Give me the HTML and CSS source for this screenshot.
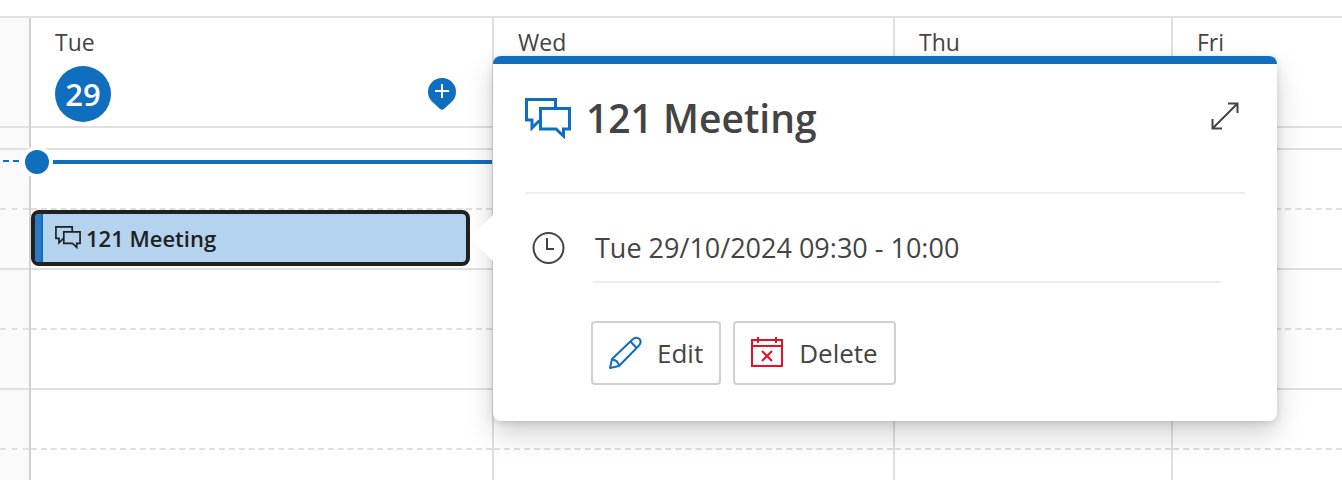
FILE: index.html
```html
<!DOCTYPE html>
<html lang="en-GB">
<head>
    <meta charset="UTF-8">
    <meta name="viewport" content="width=device-width, initial-scale=1.0">
    <title>Calendar</title>
    <link rel="stylesheet" href="styles.css">
</head>
<body>
    <svg class="sprite" aria-hidden="true">
        <symbol id="icon-chat" viewBox="0 0 46 41">
            <path d="M30.500 9V1.500H1.500V22H7V30L14.500 22.500"/>
            <path d="M15.500 10.500H44.500V31H38.500V38L31 31H15.500Z"/>
        </symbol>
    </svg>

    <main class="calendar">
        <div class="gutter">
            <div class="day-header"></div>
            <div class="all-day"></div>
            <div class="slot half">
                <span class="now-dashes"></span>
            </div>
            <div class="slot"></div>
            <div class="slot half"></div>
            <div class="slot"></div>
            <div class="slot half"></div>
            <div class="slot"></div>
        </div>

        <section class="day">
            <header class="day-header">
                <div class="day-name">Tue</div>
                <div class="day-row">
                    <span class="day-number">29</span>
                    <button class="add-btn" type="button" aria-label="Add event">
                        <svg width="28" height="32" viewBox="0 0 28 32">
                            <path d="M14 0a14 14 0 0 1 14 14c0 4-1.500 7-4 9.500l-8 7.500q-2 1.500-4 0l-8-7.500C1.500 21 0 18 0 14A14 14 0 0 1 14 0Z" fill="#106ebe"/>
                            <path d="M14 6v14M7 13h14" stroke="#fff" stroke-width="2"/>
                        </svg>
                    </button>
                </div>
            </header>
            <div class="all-day"></div>
            <div class="slot half">
                <span class="now-line"></span>
                <span class="now-dot"></span>
            </div>
            <div class="slot">
                <button class="event" type="button">
                    <span class="event-bar"></span>
                    <svg class="event-icon"><use href="#icon-chat"/></svg>
                    <span>121 Meeting</span>
                </button>

                <div class="callout" role="dialog" aria-labelledby="callout-title">
                    <div class="callout-head">
                        <svg class="callout-icon"><use href="#icon-chat"/></svg>
                        <h2 class="callout-title" id="callout-title">121 Meeting</h2>
                        <button class="expand-btn" type="button" aria-label="Open event">
                            <svg width="28" height="28" viewBox="0 0 28 28" fill="none" stroke="#444" stroke-width="2">
                                <path d="M2 26L26 2M17 1.500H26.500V11M1.500 17V26.500H11"/>
                            </svg>
                        </button>
                    </div>
                    <div class="callout-time">
                        <svg width="34" height="34" viewBox="0 0 34 34" fill="none" stroke="#444" stroke-width="2">
                            <circle cx="17.500" cy="17" r="15"/>
                            <path d="M16 7V18H23"/>
                        </svg>
                        <span class="time-text">Tue 29/10/2024 09:30 - 10:00</span>
                    </div>
                    <div class="callout-actions">
                        <button class="btn" type="button">
                            <svg width="34" height="34" viewBox="0 0 34 34" fill="none" stroke="#106ebe" stroke-width="2" stroke-linejoin="round">
                                <path d="M2 32L4 23L25 3Q28.500 .5 31.500 3Q34 6 31 9.500L11 30Z"/>
                                <path d="M4 23.500Q10 24 11 30M22.500 5.500L28.500 12"/>
                            </svg>
                            <span>Edit</span>
                        </button>
                        <button class="btn" type="button">
                            <svg width="34" height="34" viewBox="0 0 34 34" fill="none" stroke="#e81123" stroke-width="2">
                                <path d="M2 4H32V30H2ZM2 10H32M8 1V7M26 1V7M12 15L22 25M22 15L12 25"/>
                            </svg>
                            <span>Delete</span>
                        </button>
                    </div>
                </div>
            </div>
            <div class="slot half"></div>
            <div class="slot"></div>
            <div class="slot half"></div>
            <div class="slot"></div>
        </section>

        <section class="day">
            <header class="day-header">
                <div class="day-name">Wed</div>
            </header>
            <div class="all-day"></div>
            <div class="slot half"></div>
            <div class="slot"></div>
            <div class="slot half"></div>
            <div class="slot"></div>
            <div class="slot half"></div>
            <div class="slot"></div>
        </section>

        <section class="day">
            <header class="day-header">
                <div class="day-name">Thu</div>
            </header>
            <div class="all-day"></div>
            <div class="slot half"></div>
            <div class="slot"></div>
            <div class="slot half"></div>
            <div class="slot"></div>
            <div class="slot half"></div>
            <div class="slot"></div>
        </section>

        <section class="day last">
            <header class="day-header">
                <div class="day-name">Fri</div>
            </header>
            <div class="all-day"></div>
            <div class="slot half"></div>
            <div class="slot"></div>
            <div class="slot half"></div>
            <div class="slot"></div>
            <div class="slot half"></div>
            <div class="slot"></div>
        </section>
    </main>
</body>
</html>
```
FILE: styles.css
```css
:root {
    --primary: #106ebe;
    --event: #b3d3ee;
    --line: #e0e0e0;
    --line-dark: #d0d0d0;
    --line-light: #eeeeee;
    --text: #444444;
    --dark: #212121;
    --white: #ffffff;
}

* {
    margin: 0;
    padding: 0;
    box-sizing: border-box;
}

body {
    font-family: 'Segoe UI', 'Open Sans', 'Noto Sans', sans-serif;
    background: var(--white);
    color: var(--text);
    padding-top: 16px;
}

button {
    font: inherit;
    color: inherit;
    background: none;
    border: none;
    cursor: pointer;
}

svg {
    display: block;
    flex-shrink: 0;
}

.sprite {
    position: absolute;
    width: 0;
    height: 0;
}

/* Grid */
.calendar {
    display: grid;
    grid-template-columns: 31px 463fr 401fr 278fr 169fr;
    min-height: calc(100vh - 16px);
    border-top: 2px solid var(--line);
}

.gutter {
    background: #fafafa;
    border-right: 2px solid var(--line-dark);
}

.day {
    border-right: 2px solid var(--line);
}

.day.last {
    border-right: none;
}

.day-header {
    height: 110px;
    padding: 8px 36px 0 24px;
    border-bottom: 2px solid var(--line);
}

.gutter .day-header {
    padding: 0;
}

.day-name {
    font-size: 23px;
    line-height: 32px;
}

.day-row {
    display: flex;
    align-items: center;
    justify-content: space-between;
    margin-top: 8px;
}

.day-number {
    width: 56px;
    height: 56px;
    border-radius: 50%;
    background: var(--primary);
    color: var(--white);
    font-size: 31px;
    font-weight: 600;
    line-height: 56px;
    text-align: center;
}

.all-day {
    height: 22px;
    border-bottom: 2px solid var(--line);
}

.slot {
    position: relative;
    height: 60px;
    border-bottom: 2px solid var(--line);
}

.slot.half {
    border-bottom-style: dashed;
}

.slot:last-child {
    height: 30px;
    border-bottom: none;
}

/* Current time */
.now-line {
    position: absolute;
    top: 10px;
    left: 0;
    right: 0;
    height: 4px;
    background: var(--primary);
}

.now-dot {
    position: absolute;
    top: 0;
    left: -6px;
    width: 24px;
    height: 24px;
    border-radius: 50%;
    background: var(--primary);
    box-shadow: 0 0 0 4px var(--white);
}

.now-dashes {
    position: absolute;
    top: 10px;
    left: 3px;
    width: 16px;
    border-top: 2px dashed var(--primary);
}

/* Event */
.event {
    display: flex;
    align-items: center;
    width: calc(100% - 22px);
    height: 56px;
    border: 4px solid var(--dark);
    border-radius: 8px;
    background: var(--event);
    color: var(--dark);
    font-size: 22px;
    font-weight: 600;
    overflow: hidden;
}

.event-bar {
    align-self: stretch;
    width: 8px;
    background: #2b78c4;
    border-right: 2px solid var(--primary);
}

.event-icon {
    width: 26px;
    height: 23px;
    margin: 0 5px 2px 12px;
    fill: none;
    stroke: var(--dark);
    stroke-width: 3px;
}

/* Callout */
.callout {
    position: absolute;
    z-index: 10;
    top: -154px;
    left: calc(100% + 1px);
    width: 784px;
    padding: 0 32px 36px;
    background: var(--white);
    border-top: 8px solid var(--primary);
    border-radius: 8px;
    box-shadow: 0 13px 29px rgba(0, 0, 0, 0.18), 0 2px 7px rgba(0, 0, 0, 0.13);
}

.callout::before {
    content: "";
    position: absolute;
    top: 151px;
    left: -23px;
    width: 23px;
    height: 46px;
    background: var(--white);
    clip-path: polygon(0 50%, 100% 0, 100% 100%);
}

.callout-head {
    display: flex;
    align-items: flex-start;
    height: 130px;
    padding-top: 34px;
    border-bottom: 2px solid var(--line-light);
}

.callout-icon {
    width: 46px;
    height: 41px;
    fill: none;
    stroke: var(--primary);
    stroke-width: 3px;
}

.callout-title {
    flex: 1;
    margin-left: 15px;
    font-size: 39px;
    font-weight: 600;
    line-height: 40px;
}

.expand-btn {
    margin: 4px 6px 0 0;
}

.callout-time {
    display: flex;
    align-items: flex-start;
    padding: 37px 24px 0 6px;
}

.time-text {
    flex: 1;
    margin-left: 28px;
    padding: 0 0 16px 2px;
    border-bottom: 2px solid var(--line-light);
    font-size: 27px;
    line-height: 34px;
}

.callout-actions {
    display: flex;
    gap: 12px;
    padding: 38px 0 0 66px;
}

.btn {
    display: flex;
    align-items: center;
    gap: 15px;
    height: 64px;
    padding: 0 16px 0 15px;
    border: 2px solid var(--line-dark);
    border-radius: 4px;
    font-size: 26px;
}
```
